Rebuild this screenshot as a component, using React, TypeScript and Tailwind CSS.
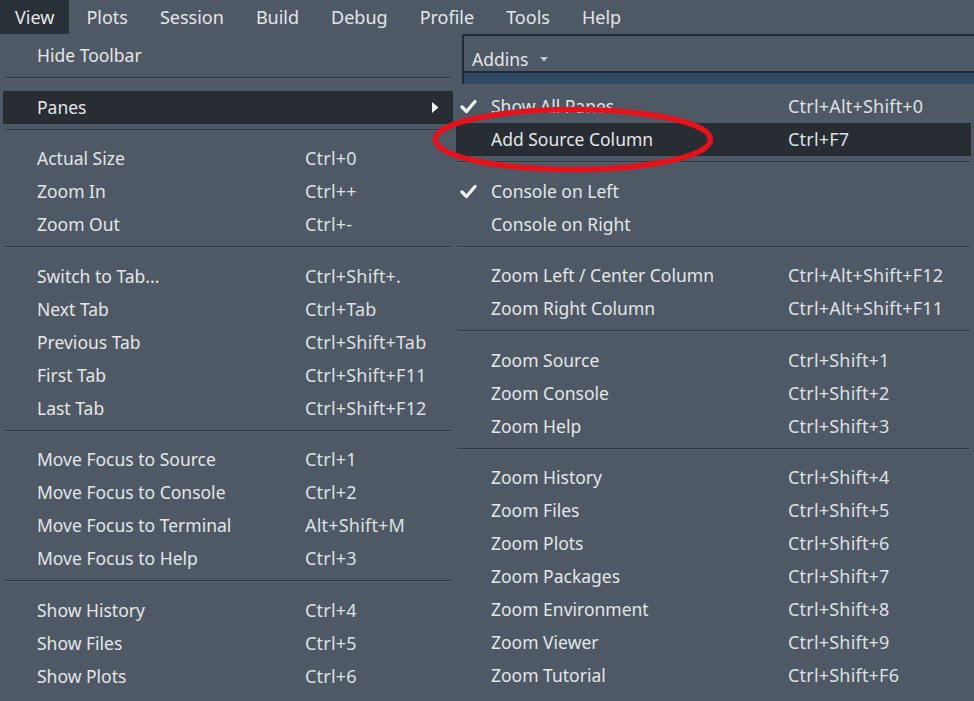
import React from 'react'

type Item = { label: string; keys?: string; sub?: boolean; active?: boolean; checked?: boolean }

const menuBar = ['View', 'Plots', 'Session', 'Build', 'Debug', 'Profile', 'Tools', 'Help']

const viewMenu: Item[][] = [
  [{ label: 'Hide Toolbar' }],
  [{ label: 'Panes', sub: true, active: true }],
  [
    { label: 'Actual Size', keys: 'Ctrl+0' },
    { label: 'Zoom In', keys: 'Ctrl++' },
    { label: 'Zoom Out', keys: 'Ctrl+-' },
  ],
  [
    { label: 'Switch to Tab...', keys: 'Ctrl+Shift+.' },
    { label: 'Next Tab', keys: 'Ctrl+Tab' },
    { label: 'Previous Tab', keys: 'Ctrl+Shift+Tab' },
    { label: 'First Tab', keys: 'Ctrl+Shift+F11' },
    { label: 'Last Tab', keys: 'Ctrl+Shift+F12' },
  ],
  [
    { label: 'Move Focus to Source', keys: 'Ctrl+1' },
    { label: 'Move Focus to Console', keys: 'Ctrl+2' },
    { label: 'Move Focus to Terminal', keys: 'Alt+Shift+M' },
    { label: 'Move Focus to Help', keys: 'Ctrl+3' },
  ],
  [
    { label: 'Show History', keys: 'Ctrl+4' },
    { label: 'Show Files', keys: 'Ctrl+5' },
    { label: 'Show Plots', keys: 'Ctrl+6' },
  ],
]

const panesMenu: Item[][] = [
  [
    { label: 'Show All Panes', keys: 'Ctrl+Alt+Shift+0', checked: true },
    { label: 'Add Source Column', keys: 'Ctrl+F7', active: true },
  ],
  [
    { label: 'Console on Left', checked: true },
    { label: 'Console on Right' },
  ],
  [
    { label: 'Zoom Left / Center Column', keys: 'Ctrl+Alt+Shift+F12' },
    { label: 'Zoom Right Column', keys: 'Ctrl+Alt+Shift+F11' },
  ],
  [
    { label: 'Zoom Source', keys: 'Ctrl+Shift+1' },
    { label: 'Zoom Console', keys: 'Ctrl+Shift+2' },
    { label: 'Zoom Help', keys: 'Ctrl+Shift+3' },
  ],
  [
    { label: 'Zoom History', keys: 'Ctrl+Shift+4' },
    { label: 'Zoom Files', keys: 'Ctrl+Shift+5' },
    { label: 'Zoom Plots', keys: 'Ctrl+Shift+6' },
    { label: 'Zoom Packages', keys: 'Ctrl+Shift+7' },
    { label: 'Zoom Environment', keys: 'Ctrl+Shift+8' },
    { label: 'Zoom Viewer', keys: 'Ctrl+Shift+9' },
    { label: 'Zoom Tutorial', keys: 'Ctrl+Shift+F6' },
  ],
]

const Check = () => (
  <svg width="17" height="15" viewBox="0 0 17 15" className="absolute left-[4px] top-[9px]">
    <path d="M2 8 L6.5 12.5 L15 2.5" fill="none" stroke="#f2f2f2" strokeWidth="3.2" strokeLinecap="round" strokeLinejoin="round" />
  </svg>
)

const Separator = () => (
  <div className="mx-[2px] pt-[5px] pb-[11.5px]">
    <div className="h-[1px] bg-[#2f363e]" />
    <div className="h-[1px] bg-[#58636e]" />
  </div>
)

const Row = ({ item, labelWidth, padLeft }: { item: Item; labelWidth: string; padLeft: string }) => (
  <div
    className={`relative flex h-[33px] items-center ${padLeft} ${item.active ? 'bg-[#272d33]' : ''}`}
  >
    {item.checked && <Check />}
    <div className={`${labelWidth} shrink-0`}>{item.label}</div>
    {item.keys && <div className="text-[18px] tracking-[0.2px] text-[#dde0e3]">{item.keys}</div>}
    {item.sub && (
      <svg width="7" height="11" viewBox="0 0 7 11" className="absolute right-[14px] top-[11px]">
        <path d="M0 0 L6.5 5.5 L0 11 Z" fill="#f0f0f0" />
      </svg>
    )}
  </div>
)

const Menu = ({ groups, labelWidth, padLeft }: { groups: Item[][]; labelWidth: string; padLeft: string }) => (
  <div className="flex flex-col">
    {groups.map((g, gi) => (
      <div key={gi}>
        {gi > 0 && <Separator />}
        {g.map((item) => (
          <Row key={item.label} item={item} labelWidth={labelWidth} padLeft={padLeft} />
        ))}
      </div>
    ))}
  </div>
)

export default function App() {
  return (
    <div
      className="relative h-[701px] w-[974px] overflow-hidden bg-[#4e5965] text-[17.5px] text-[#e4e6e8]"
      style={{ fontFamily: '"Noto Sans", "Open Sans", sans-serif' }}
    >
      {/* menu bar */}
      <div className="flex h-[34px] items-center text-[18px]">
        {menuBar.map((m, i) => (
          <div
            key={m}
            className={`flex h-full items-center pt-[1px] ${i === 0 ? 'mr-[1px] bg-[#2a3037] pl-[15px] pr-[15px]' : 'px-[16px]'}`}
          >
            {m}
          </div>
        ))}
      </div>

      <div className="flex">
        {/* View menu */}
        <div className="w-[453px] shrink-0 pl-[3px] pt-[5px]">
          <Menu groups={viewMenu} labelWidth="w-[268px]" padLeft="pl-[34px]" />
        </div>

        {/* right side: toolbar behind + Panes submenu */}
        <div className="flex-1">
          <div className="ml-[9px] border-l-2 border-t-2 border-[#222b34]">
            <div className="flex h-[37px] items-center border-b-2 border-[#1f2a35] pl-[8px] pt-[11px]">
              <span>Addins</span>
              <svg width="8" height="5" viewBox="0 0 8 5" className="ml-[12px]">
                <path d="M0 0 L8 0 L4 4.5 Z" fill="#c9ced3" />
              </svg>
            </div>
            <div className="h-[11px] bg-[#2f4a62]" />
          </div>
          <div className="pt-[6px] pl-[3px] pr-[3px]">
            <Menu groups={panesMenu} labelWidth="w-[297px]" padLeft="pl-[35px]" />
          </div>
        </div>
      </div>

      {/* annotation */}
      <svg width="290" height="72" viewBox="0 0 290 72" className="pointer-events-none absolute left-[430px] top-[104px]">
        <ellipse cx="143" cy="35.5" rx="137.5" ry="30" fill="none" stroke="#e5121b" strokeWidth="5.5" />
      </svg>
    </div>
  )
}
